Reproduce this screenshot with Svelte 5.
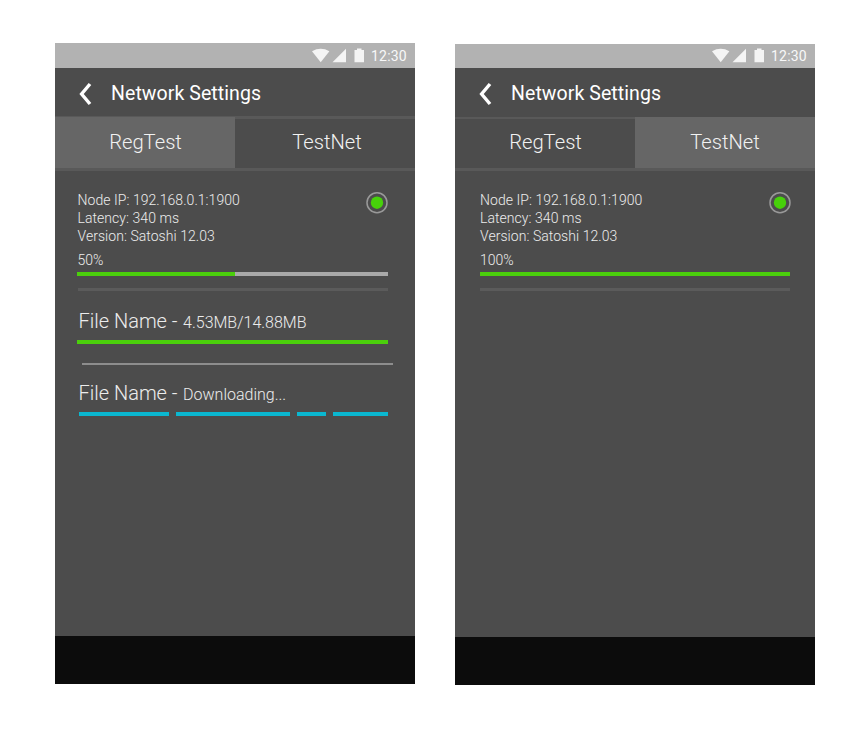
<script>
  const files = [
    { name: 'File Name -', detail: '4.53MB/14.88MB', kind: 'size' },
    { name: 'File Name -', detail: 'Downloading...', kind: 'loading' }
  ];
  const phones = [
    { id: 'left', active: 'RegTest', progress: 50, fill: 50.8, files },
    { id: 'right', active: 'TestNet', progress: 100, fill: 100, files: [] }
  ];
  const tabs = ['RegTest', 'TestNet'];
  const segments = [[0, 90.5], [6.5, 114], [7, 29], [7, 55]];
</script>

<main>
  {#each phones as phone}
    <section class="phone {phone.id}">
      <div class="status">
        <svg class="signals" width="54" height="16" viewBox="0 0 54 16" fill="#f4f4f4">
          <path d="M0 3.2Q8.7-1.6 17.4 3.2L8.7 14.2Z" />
          <path d="M20.5 14.2L34 0.8V14.2Z" />
          <path d="M42.5 2H45V0.5H49.5V2H52V14.2H42.5Z" />
        </svg>
        <span class="clock">12:30</span>
      </div>
      <header>
        <svg width="13" height="24" viewBox="0 0 13 24" fill="none" stroke="#fff" stroke-width="3.4">
          <path d="M11 2L2.6 12L11 22" />
        </svg>
        <h1>Network Settings</h1>
      </header>
      <nav>
        {#each tabs as tab}
          <div class="tab" class:active={tab === phone.active}>{tab}</div>
        {/each}
      </nav>
      <div class="content">
        <div class="node">
          <div class="info">
            <p>Node IP: 192.168.0.1:1900</p>
            <p>Latency: 340 ms</p>
            <p>Version: Satoshi 12.03</p>
          </div>
          <svg class="dot" width="24" height="24" viewBox="0 0 24 24">
            <circle cx="12" cy="11.7" r="10" fill="none" stroke="#999" stroke-width="1.5" />
            <circle cx="12" cy="11.7" r="6.2" fill="#47d10a" />
          </svg>
        </div>
        <p class="percent">{phone.progress}%</p>
        <div class="bar"><i style="width: {phone.fill}%"></i></div>
        <div class="divider"></div>
        {#each phone.files as file}
          <div class="file {file.kind}">
            <p><span class="name">{file.name}</span><span class="detail">{file.detail}</span></p>
            {#if file.kind === 'size'}
              <div class="bar"><i style="width: 100%"></i></div>
              <div class="rule"></div>
            {:else}
              <div class="segments">
                {#each segments as [gap, width]}
                  <i style="width: {width}px; margin-left: {gap}px"></i>
                {/each}
              </div>
            {/if}
          </div>
        {/each}
      </div>
      <footer></footer>
    </section>
  {/each}
</main>

<style>
  :global(body) { margin: 0; background: #fff; }
  main {
    box-sizing: border-box;
    width: 864px;
    height: 740px;
    padding: 43px 0 0 55px;
    display: flex;
    gap: 40px;
    font-family: Roboto, sans-serif;
    color: #ececec;
  }
  p, h1 { margin: 0; white-space: nowrap; }
  .phone {
    width: 360px;
    height: 641px;
    background: #4c4c4c;
    display: flex;
    flex-direction: column;
  }
  .right { margin-top: 1px; }
  .status {
    height: 25px;
    background: #b2b2b2;
    display: flex;
    align-items: center;
    justify-content: flex-end;
    padding-right: 7px;
    box-sizing: border-box;
  }
  .right .status { height: 24px; }
  .signals { margin-right: 5px; }
  .clock { font-size: 14px; line-height: 23px; padding-top: 2px; font-weight: 400; letter-spacing: 0.2px; color: #f8f8f8; width: 37px; }
  .right .clock { padding-top: 0; }
  header { height: 48px; display: flex; align-items: center; padding-left: 24px; }
  header svg { margin-top: 3px; }
  h1 { margin: 3px 0 0 19px; font-size: 19.5px; line-height: 24px; font-weight: 400; letter-spacing: 0.07px; color: #fff; }
  nav {
    display: flex;
    height: 49px;
    border-top: 3px solid #595959;
    border-bottom: 3px solid #595959;
  }
  .right nav { margin-top: 1px; border-top-width: 2px; }
  .tab {
    box-sizing: border-box;
    width: 50%;
    display: flex;
    align-items: center;
    justify-content: center;
    padding: 0 0 3px 1px;
    font-size: 20.2px;
    font-weight: 300;
    color: #f2f2f2;
  }
  .tab:last-child { padding-left: 4px; }
  .right .tab:last-child { padding-left: 0; }
  .tab.active { background: #666; box-shadow: 0 -2px #666; }
  .content { flex: 1; padding: 19px 27px 0 22.5px; font-weight: 300; }
  .right .content { padding: 19px 25px 0 25px; }
  .node {
    display: flex;
    justify-content: space-between;
    height: 59px;
    padding-top: 1px;
    font-size: 14px;
    line-height: 18px;
    letter-spacing: 0.05px;
  }
  .dot { margin-right: -1px; }
  .right .dot { margin-right: -1.7px; }
  .percent { font-size: 14px; line-height: 18px; height: 21px; padding-top: 1px; }
  .bar { height: 4px; margin-left: -0.5px; background: #a9a9a9; }
  .bar i { display: block; height: 100%; background: #4bcf0c; }
  .divider { height: 3px; margin-top: 12px; background: #5b5b5b; }
  .file p { line-height: 24px; height: 31px; padding-left: 1px; }
  .size { margin-top: 18px; }
  .name { font-size: 20px; margin-right: 5.5px; }
  .detail { font-size: 16px; }
  .rule { height: 2px; margin: 19px -5px 16px 4.5px; background: #8d8d8d; }
  .segments { display: flex; padding-left: 1px; }
  .segments i { flex: none; height: 4px; background: #0ab7d0; }
  footer { height: 48px; background: #0c0c0c; }
</style>
